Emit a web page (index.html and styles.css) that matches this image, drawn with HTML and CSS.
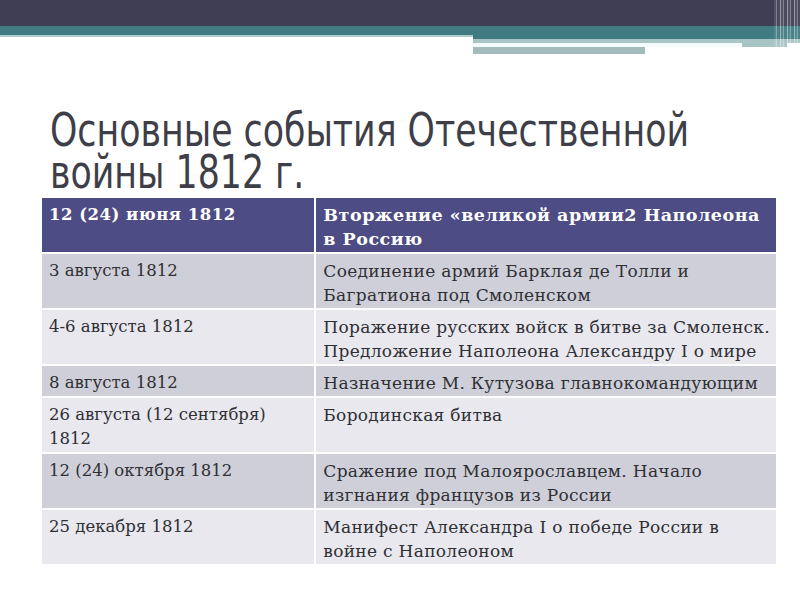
FILE: index.html
```html
<!DOCTYPE html>
<html lang="ru">
<head>
<meta charset="utf-8">
<title>Основные события Отечественной войны 1812 г.</title>
<link rel="stylesheet" href="styles.css">
</head>
<body>
<div class="slide">
  <header class="deco">
    <div class="deco-dark"></div>
    <div class="deco-bands">
      <div class="band-left">
        <div class="teal-short"></div>
        <div class="pale-short"></div>
      </div>
      <div class="band-right">
        <div class="teal-long"></div>
        <div class="pale-gap"></div>
        <div class="line-row">
          <div class="white-line"></div>
          <div class="pale-rest"></div>
        </div>
        <div class="gray-bar"></div>
      </div>
    </div>
    <div class="stripes"></div>
  </header>

  <h1 class="title">Основные события Отечественной<br>войны 1812 г.</h1>

  <table class="events">
    <tr class="head">
      <td class="c-date">12 (24) июня 1812</td>
      <td class="c-event">Вторжение «великой армии2 Наполеона<br>в Россию</td>
    </tr>
    <tr class="dark">
      <td class="c-date">3 августа 1812</td>
      <td class="c-event">Соединение армий Барклая де Толли и<br>Багратиона под Смоленском</td>
    </tr>
    <tr class="light">
      <td class="c-date">4-6 августа 1812</td>
      <td class="c-event">Поражение русских войск в битве за Смоленск.<br>Предложение Наполеона Александру I о мире</td>
    </tr>
    <tr class="dark">
      <td class="c-date">8 августа 1812</td>
      <td class="c-event">Назначение М. Кутузова главнокомандующим</td>
    </tr>
    <tr class="light">
      <td class="c-date">26 августа (12 сентября)<br>1812</td>
      <td class="c-event">Бородинская битва</td>
    </tr>
    <tr class="dark">
      <td class="c-date">12 (24) октября 1812</td>
      <td class="c-event">Сражение под Малоярославцем. Начало<br>изгнания французов из России</td>
    </tr>
    <tr class="light">
      <td class="c-date">25 декабря 1812</td>
      <td class="c-event">Манифест Александра I о победе России в<br>войне с Наполеоном</td>
    </tr>
  </table>
</div>
</body>
</html>
```

FILE: styles.css
```css
html, body {
  margin: 0;
  padding: 0;
  background: #ffffff;
}

.slide {
  position: relative;
  width: 800px;
  height: 600px;
  overflow: hidden;
  background: #ffffff;
}

/* top decoration */
.deco {
  position: relative;
  height: 56px;
}
.deco-dark {
  height: 26px;
  background: #403e54;
}
.deco-bands {
  display: flex;
}
.band-left {
  width: 473px;
}
.teal-short {
  height: 9px;
  background: #3f7b81;
}
.pale-short {
  height: 2px;
  background: #b2cccd;
}
.band-right {
  flex: 1;
}
.teal-long {
  height: 13px;
  background: #3f7b81;
}
.pale-gap {
  height: 4px;
  background: #a9c4c5;
}
.line-row {
  display: flex;
  height: 4px;
}
.white-line {
  width: 269px;
  background: #f4fbfb;
}
.pale-rest {
  width: 45px;
  background: #a9c4c5;
}
.gray-bar {
  width: 172px;
  height: 7px;
  background: #a3bbbb;
}
.stripes {
  position: absolute;
  top: 0;
  right: 0;
  width: 26px;
  height: 54px;
  background: repeating-linear-gradient(90deg,
    rgba(255,255,255,0.10) 0px, rgba(255,255,255,0.10) 2px,
    rgba(255,255,255,0.35) 2px, rgba(255,255,255,0.35) 3px,
    rgba(255,255,255,0.05) 3px, rgba(255,255,255,0.05) 6px,
    rgba(255,255,255,0.45) 6px, rgba(255,255,255,0.45) 7px);
}

/* title */
.title {
  margin: 53px 0 0 50px;
  font-family: "DejaVu Sans Condensed", "DejaVu Sans", sans-serif;
  font-stretch: condensed;
  font-weight: normal;
  font-size: 46px;
  line-height: 42px;
  color: #3e3e48;
  white-space: nowrap;
  transform: scaleX(0.84);
  transform-origin: left top;
}

/* table */
.events {
  margin: 3px 0 0 40px;
  width: 738px;
  border-collapse: collapse;
  font-family: "DejaVu Serif", "Liberation Serif", serif;
  line-height: 24px;
  color: #2f2f34;
}
.events td {
  border: 2px solid #ffffff;
  padding: 5px 6px 1px 7px;
  vertical-align: top;
  white-space: nowrap;
}
.c-date {
  width: 263px;
  font-size: 16.5px;
}
.c-event {
  font-size: 17px;
  letter-spacing: 0.3px;
}
.head td {
  background: #4e4c84;
  color: #ffffff;
  font-weight: bold;
  letter-spacing: 0.5px;
}
.head .c-event {
  font-size: 17.5px;
}
.dark td {
  background: #cfcfd9;
}
.light td {
  background: #e8e8ee;
}
```
